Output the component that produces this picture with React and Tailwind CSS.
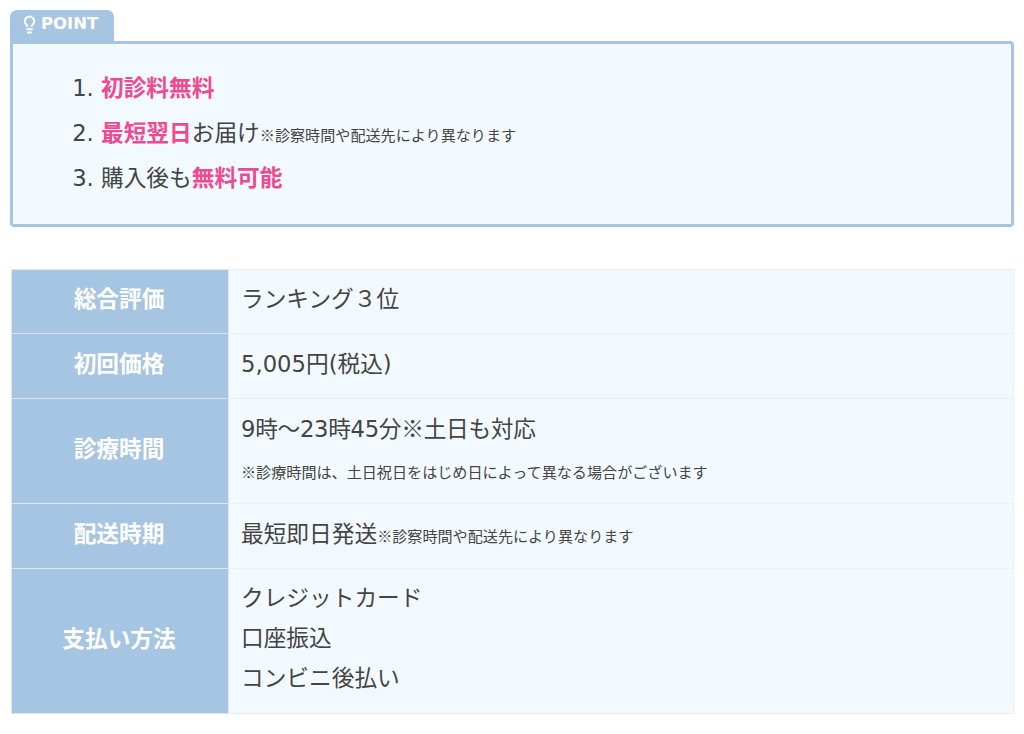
import React from 'react';
import { Lightbulb } from 'lucide-react';

const jp = '[font-family:"DejaVu_Sans","Noto_Sans_CJK_JP",sans-serif]';
const cjk = '[font-family:"Noto_Sans_CJK_JP",sans-serif]';

function Note({ children }) {
  return <span className={`text-[15.1px] ${cjk}`}>{children}</span>;
}

function Pink({ children }) {
  return <strong className="font-bold text-[#ee4a92]">{children}</strong>;
}

function Row({ label, height, children }) {
  return (
    <tr style={{ height }}>
      <th className="w-[217px] border border-[#dbe6f1] bg-[#a6c5e2] pb-[4px] pl-0 pr-[2px] pt-0 text-center text-[22.7px] font-bold text-white">
        {label}
      </th>
      <td className="border border-[#eeeeee] bg-[#f3faff] pb-[4px] pl-[12px] pr-0 pt-0 align-middle">
        {children}
      </td>
    </tr>
  );
}

export default function App() {
  return (
    <div className={`min-h-[734px] bg-white px-[10px] pt-[10px] text-[22.7px] text-[#444444] ${jp}`}>
      {/* Point box */}
      <div className="flex h-[31px] w-[104px] items-center gap-[2px] rounded-t-[7px] bg-[#a6c5e2] pb-[3px] pl-[10px] text-[16.5px] font-bold text-white">
        <Lightbulb size={19} strokeWidth={2.6} />
        <span>POINT</span>
      </div>
      <div className="rounded-b-[4px] rounded-tr-[4px] border-[3px] border-[#a6c5e2] bg-[#f3faff] pb-[23px] pl-[88px] pt-[22px]">
        <ol className="list-decimal">
          <li className="h-[45px] leading-[45px]">
            <Pink>初診料無料</Pink>
          </li>
          <li className="h-[45px] leading-[45px]">
            <Pink>最短翌日</Pink>お届け<Note>※診察時間や配送先により異なります</Note>
          </li>
          <li className="h-[45px] leading-[45px]">
            購入後も<Pink>無料可能</Pink>
          </li>
        </ol>
      </div>

      {/* Spec table */}
      <table className="ml-px mt-[42px] w-[1003px] table-fixed border-collapse">
        <tbody>
          <Row label="総合評価" height={64}>ランキング３位</Row>
          <Row label="初回価格" height={65}>5,005円(税込)</Row>
          <Row label="診療時間" height={105}>
            <p className="leading-[40px] tracking-[-0.3px]">
              9時～23時45分<span className={cjk}>※</span>土日も対応
            </p>
            <p className={`mt-[2px] text-[15.1px] leading-[40px] ${cjk}`}>
              ※診療時間は、土日祝日をはじめ日によって異なる場合がございます
            </p>
          </Row>
          <Row label="配送時期" height={65}>
            最短即日発送<Note>※診察時間や配送先により異なります</Note>
          </Row>
          <Row label="支払い方法" height={145}>
            <div className="mb-[2px]">
              <p className="leading-[40px]">クレジットカード</p>
              <p className="leading-[40px]">口座振込</p>
              <p className="leading-[40px]">コンビニ後払い</p>
            </div>
          </Row>
        </tbody>
      </table>
    </div>
  );
}
